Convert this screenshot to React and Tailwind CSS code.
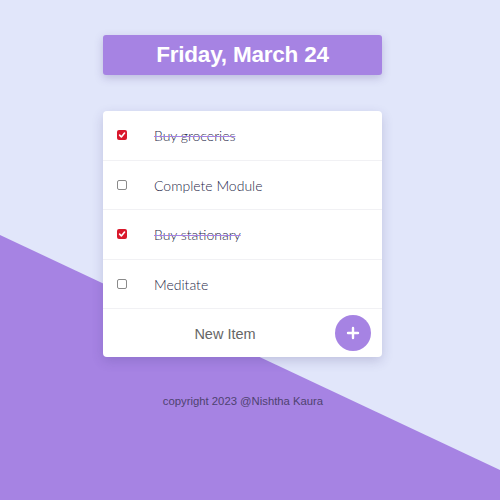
import React from "react";

function Box({ checked }) {
  return checked ? (
    <div className="w-[10px] h-[10px] rounded-[2px] bg-[#d9182c] flex items-center justify-center">
      <svg width="8" height="8" viewBox="0 0 10 10">
        <path d="M2 5.2 L4.2 7.4 L8.2 2.6" fill="none" stroke="white" strokeWidth="2" strokeLinecap="round" strokeLinejoin="round" />
      </svg>
    </div>
  ) : (
    <div className="w-[10px] h-[10px] rounded-[2px] bg-white border border-[#8a8a8a]" />
  );
}

const items = [
  { t: "Buy groceries", c: true },
  { t: "Complete Module", c: false },
  { t: "Buy stationary", c: true },
  { t: "Meditate", c: false },
];

export default function App() {
  return (
    <div className="relative w-full h-[500px] overflow-hidden bg-[#e1e6fa]" style={{ fontFamily: '"Liberation Sans", Arial, sans-serif' }}>
      <div className="absolute inset-0 bg-[#a683e3] [clip-path:polygon(0_235px,100%_470px,100%_100%,0_100%)]" />
      <div className="relative flex flex-col items-center pt-[35px]">
        <div className="w-[279px] h-[40px] rounded-[3px] bg-[#a683e3] shadow-[0_3px_8px_rgba(80,60,140,0.25)] flex items-center justify-center ml-[-15px]">
          <span className="text-white font-bold text-[22.5px] tracking-[-0.2px]">Friday, March 24</span>
        </div>
        <div className="mt-[36px] w-[279px] rounded-[4px] bg-white shadow-[0_4px_12px_rgba(60,50,120,0.2)] ml-[-15px]">
          {items.map((it, i) => (
            <div key={i} className="h-[49.5px] flex items-center border-b border-[#f1f1f4]">
              <div className="w-[51px] pl-[14px] flex items-center"><Box checked={it.c} /></div>
              <span className={"text-[14px] text-[#1f2848] pt-[1px] " + (it.c ? "line-through decoration-[#a683e3]" : "")} style={{ fontFamily: 'Lato, "Liberation Sans", sans-serif', fontWeight: 300 }}>{it.t}</span>
            </div>
          ))}
          <div className="h-[48px] flex items-center">
            <span className="flex-1 text-center text-[14.5px] text-[#666] pl-[12px] pt-[3px]">New Item</span>
            <div className="w-[36px] h-[36px] rounded-full bg-[#a683e3] flex items-center justify-center mr-[11px]">
              <svg width="14" height="14" viewBox="0 0 14 14"><path d="M7 2 V12 M2 7 H12" stroke="white" strokeWidth="2.4" strokeLinecap="round" /></svg>
            </div>
          </div>
        </div>
        <p className="mt-[36px] text-[11.3px] text-[#4e4270] ml-[-14px]">copyright 2023 @Nishtha Kaura</p>
      </div>
    </div>
  );
}
